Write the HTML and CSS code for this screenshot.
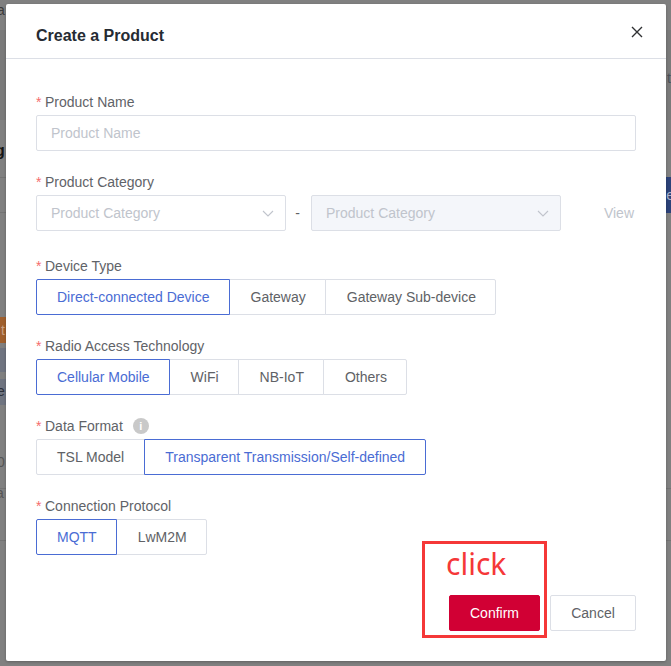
FILE: index.html
```html
<!DOCTYPE html>
<html lang="en">
<head>
<meta charset="utf-8">
<title>Create a Product</title>
<link rel="stylesheet" href="styles.css">
</head>
<body>
<div class="backdrop" aria-hidden="true">
  <span class="bg bg-band-top"></span>
  <span class="bg bg-line l1"></span>
  <span class="bg bg-line l2"></span>
  <span class="bg bg-line l3"></span>
  <span class="bg bg-line l4"></span>
  <span class="bg bg-orange"></span>
  <span class="bg bg-slate s1"></span>
  <span class="bg bg-slate s2"></span>
  <span class="bg bg-blue"></span>
  <span class="frag f-a1">a</span>
  <span class="frag f-g">g</span>
  <span class="frag f-t1">t</span>
  <span class="frag f-e">e</span>
  <span class="frag f-0">0</span>
  <span class="frag f-a2">a</span>
  <span class="frag f-t2">t</span>
  <span class="frag f-blue">e</span>
</div>

<section class="dialog">
  <header class="dialog-head">
    <h1 class="dialog-title">Create a Product</h1>
    <svg class="close" width="12" height="12" viewBox="0 0 12 12"><path d="M1 1l10 10M11 1L1 11" fill="none" stroke="#303133" stroke-width="1.4"/></svg>
  </header>

  <form class="dialog-body">
    <div class="field">
      <div class="label"><i>*</i>Product Name</div>
      <div class="input placeholder">Product Name</div>
    </div>

    <div class="field field-cat">
      <div class="label"><i>*</i>Product Category</div>
      <div class="cat-row">
        <div class="input select placeholder">Product Category
          <svg class="chev" width="12" height="7" viewBox="0 0 12 7"><path d="M1 1l5 5 5-5" fill="none" stroke="#c0c4cc" stroke-width="1.1"/></svg>
        </div>
        <span class="dash">-</span>
        <div class="input select disabled placeholder">Product Category
          <svg class="chev" width="12" height="7" viewBox="0 0 12 7"><path d="M1 1l5 5 5-5" fill="none" stroke="#c0c4cc" stroke-width="1.1"/></svg>
        </div>
        <span class="view">View</span>
      </div>
    </div>

    <div class="field">
      <div class="label"><i>*</i>Device Type</div>
      <div class="seg">
        <span class="seg-item on">Direct-connected Device</span>
        <span class="seg-item">Gateway</span>
        <span class="seg-item">Gateway Sub-device</span>
      </div>
    </div>

    <div class="field">
      <div class="label"><i>*</i>Radio Access Technology</div>
      <div class="seg">
        <span class="seg-item on">Cellular Mobile</span>
        <span class="seg-item">WiFi</span>
        <span class="seg-item">NB-IoT</span>
        <span class="seg-item">Others</span>
      </div>
    </div>

    <div class="field">
      <div class="label"><i>*</i>Data Format<span class="info">i</span></div>
      <div class="seg">
        <span class="seg-item">TSL Model</span>
        <span class="seg-item on">Transparent Transmission/Self-defined</span>
      </div>
    </div>

    <div class="field">
      <div class="label"><i>*</i>Connection Protocol</div>
      <div class="seg">
        <span class="seg-item on">MQTT</span>
        <span class="seg-item">LwM2M</span>
      </div>
    </div>
  </form>

  <footer class="dialog-foot">
    <span class="btn primary">Confirm</span>
    <span class="btn">Cancel</span>
  </footer>

  <div class="note">
    <span class="note-text">click</span>
  </div>
</section>
</body>
</html>
```

FILE: styles.css
```css
* { box-sizing: border-box; }

html, body { height: 100%; }

body {
  margin: 0;
  overflow: hidden;
  position: relative;
  background: #808080;
  font-family: "Liberation Sans", Arial, sans-serif;
  font-size: 14px;
  color: #606266;
}

/* dimmed page behind the modal */
.backdrop { position: absolute; inset: 0; }
.bg { position: absolute; display: block; }
.bg-band-top { left: 0; right: 0; top: 30px; height: 90px; background: #7a7a7a; }
.bg-line { left: 0; right: 0; height: 1px; background: #737373; }
.l1 { top: 177px; }
.l2 { top: 212px; }
.l3 { top: 488px; }
.l4 { top: 540px; }
.bg-orange { left: 0; width: 6px; top: 317px; height: 26px; background: #a0602e; }
.bg-slate { left: 0; width: 6px; background: #6f7480; }
.s1 { top: 348px; height: 24px; }
.s2 { top: 379px; height: 26px; }
.bg-blue { right: 0; width: 6px; top: 177px; height: 36px; background: #2c4279; }

.frag { position: absolute; font-size: 14px; line-height: 16px; color: #3a3a3a; }
.f-a1 { left: -3px; top: 2px; }
.f-g { left: -5px; top: 143px; font-size: 16px; font-weight: bold; color: #151515; }
.f-t1 { left: 1px; top: 322px; color: #c9a184; }
.f-e { left: -3px; top: 383px; color: #2b2f38; }
.f-0 { left: -3px; top: 454px; color: #555; }
.f-a2 { left: -4px; top: 485px; color: #555; }
.f-t2 { right: 0; top: 70px; color: #4a5058; }
.f-blue { right: -3px; top: 187px; color: #a9b3cc; }

/* modal */
.dialog {
  position: relative;
  display: flex;
  flex-direction: column;
  width: 660px;
  height: 657px;
  margin: 4px 0 0 6px;
  background: #fff;
  border-radius: 2px;
  box-shadow: 0 1px 3px rgba(0, 0, 0, .25);
}

.dialog-head {
  display: flex;
  align-items: center;
  justify-content: space-between;
  flex: none;
  height: 55px;
  padding: 10px 23px 0 30px;
  border-bottom: 1px solid #dcdfe6;
}

.dialog-title {
  margin: 0;
  font-size: 16px;
  line-height: 22px;
  font-weight: bold;
  color: #262b33;
}

.close { display: block; margin-top: -8px; }

.dialog-body {
  display: flex;
  flex-direction: column;
  gap: 20px;
  padding: 32px 30px 0;
}

.label {
  display: flex;
  align-items: center;
  height: 22px;
  margin-bottom: 2px;
  line-height: 22px;
  color: #5f6368;
}

.label i {
  width: 9px;
  font-style: normal;
  color: #f56c6c;
}

.info {
  display: flex;
  align-items: center;
  justify-content: center;
  width: 16px;
  height: 16px;
  margin-left: 10px;
  border-radius: 50%;
  background: #c9c9c9;
  color: #fff;
  font-size: 11px;
  font-weight: bold;
  line-height: 16px;
}

.input {
  display: flex;
  align-items: center;
  height: 36px;
  padding: 0 15px 0 14px;
  border: 1px solid #dcdfe6;
  border-radius: 2px;
  background: #fff;
}

.placeholder { color: #c0c4cc; }

.field-cat { margin-bottom: 4px; }

.cat-row { display: flex; align-items: center; }

.select {
  justify-content: space-between;
  width: 250px;
  padding-right: 11px;
}

.disabled { background: #f4f6fa; }

.dash { width: 25px; padding-right: 2px; text-align: center; color: #606266; }

.view { margin-left: auto; padding-right: 2px; color: #c0c4cc; }

.chev { display: block; }

.seg { display: flex; }

.seg-item {
  display: flex;
  align-items: center;
  height: 36px;
  padding: 0 20px;
  margin-left: -1px;
  border: 1px solid #dcdfe6;
  color: #606266;
  background: #fff;
}

.seg-item:first-child {
  margin-left: 0;
  border-radius: 2px 0 0 2px;
}

.seg-item:first-child.on { padding-right: 19px; }

.seg-item:first-child.on ~ .seg-item { padding: 0 19px 0 21px; }

.seg-item:last-child { border-radius: 0 2px 2px 0; }

.seg-item.on {
  position: relative;
  z-index: 1;
  border-color: #4a6cd4;
  color: #4a6cd4;
}

.dialog-foot {
  display: flex;
  justify-content: flex-end;
  gap: 10px;
  margin-top: auto;
  padding: 0 30px 30px;
}

.btn {
  display: flex;
  align-items: center;
  justify-content: center;
  width: 86px;
  height: 36px;
  border: 1px solid #dcdfe6;
  border-radius: 2px;
  background: #fff;
  color: #606266;
}

.btn.primary {
  width: 91px;
  border-color: #d10034;
  background: #d10034;
  color: #fff;
}

/* red annotation drawn over the screenshot */
.note {
  position: absolute;
  left: 416px;
  top: 537px;
  width: 125px;
  height: 97px;
  border: 3px solid #f53838;
  pointer-events: none;
}

.note-text {
  position: absolute;
  left: 21px;
  top: 0;
  font-family: "Noto Sans", sans-serif;
  font-size: 30px;
  line-height: 40px;
  color: #f53838;
}
```
